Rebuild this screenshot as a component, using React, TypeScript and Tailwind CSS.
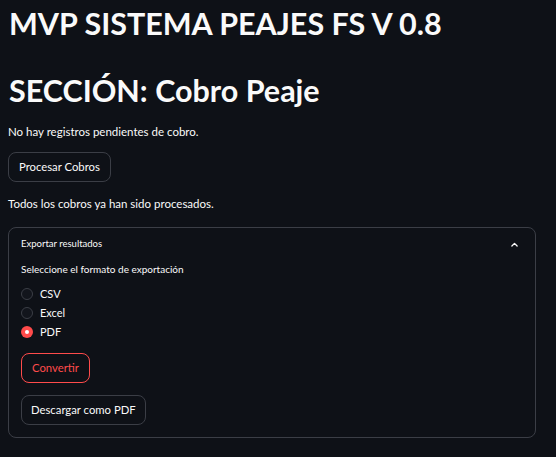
import { useState } from "react";

const formats = ["CSV", "Excel", "PDF"];

export default function App() {
  const [format, setFormat] = useState("PDF");
  const [open, setOpen] = useState(true);

  return (
    <div
      className="min-h-[457px] w-[556px] bg-[#0e1117] text-[#fafafa]"
      style={{ fontFamily: "Lato, 'Noto Sans', sans-serif" }}
    >
      <div className="w-[528px] ml-[8px] pt-[3px]">
        <h1 className="pl-[1px] text-[30.5px] font-bold leading-[40px]">
          MVP SISTEMA PEAJES FS V 0.8
        </h1>
        <h2 className="mt-[27px] pl-[1px] text-[30.5px] font-bold leading-[40px]">
          SECCIÓN: Cobro Peaje
        </h2>
        <p className="mt-[13px] text-[11.5px] leading-[18px]">
          No hay registros pendientes de cobro.
        </p>
        <button className="mt-[11px] h-[30px] rounded-[8px] border border-[#3b3e46] px-[10px] text-[11.3px]">
          Procesar Cobros
        </button>
        <p className="mt-[13px] text-[11.5px] leading-[18px]">
          Todos los cobros ya han sido procesados.
        </p>

        <div className="mt-[14px] rounded-[8px] border border-[#3b3e46]">
          <button
            onClick={() => setOpen(!open)}
            className="flex w-full items-center justify-between pl-[12px] pr-[16px] pt-[9px] text-[9.5px] leading-[14px]"
          >
            <span>Exportar resultados</span>
            <svg width="9" height="9" viewBox="0 0 24 24" fill="none" stroke="#fafafa" strokeWidth="3.5" strokeLinecap="round" strokeLinejoin="round">
              <path d={open ? "M5 16l7-7 7 7" : "M5 9l7 7 7-7"} />
            </svg>
          </button>
          {open ? (
            <div className="px-[12px] pb-[12px]">
              <div className="mt-[11px] text-[10px] leading-[14px]">
                Seleccione el formato de exportación
              </div>
              <div className="mt-[11px] flex flex-col gap-[5px]">
                {formats.map((f) => (
                  <label
                    key={f}
                    className="flex h-[14px] cursor-pointer items-center gap-[7px] text-[11px]"
                    onClick={() => setFormat(f)}
                  >
                    {format === f ? (
                      <span className="flex h-[12px] w-[12px] items-center justify-center rounded-full bg-[#ff4b4b]">
                        <span className="h-[4px] w-[4px] rounded-full bg-white" />
                      </span>
                    ) : (
                      <span className="h-[12px] w-[12px] rounded-full border border-[#3b3e46] bg-[#12151c]" />
                    )}
                    <span>{f}</span>
                  </label>
                ))}
              </div>
              <button className="mt-[14px] block h-[30px] rounded-[8px] border border-[#ff4b4b] px-[10px] text-[11.3px] text-[#ff4b4b]">
                Convertir
              </button>
              <button className="mt-[12px] block h-[30px] rounded-[8px] border border-[#3b3e46] px-[9px] text-[11.3px]">
                Descargar como PDF
              </button>
            </div>
          ) : null}
        </div>
      </div>
    </div>
  );
}
